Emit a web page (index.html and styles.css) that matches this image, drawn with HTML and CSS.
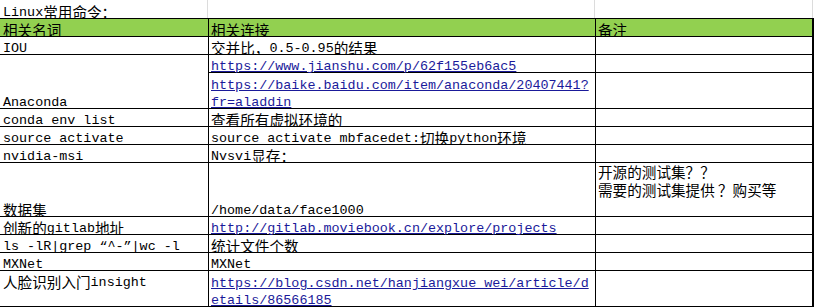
FILE: index.html
```html
<!DOCTYPE html>
<html>
<head>
<meta charset="utf-8">
<link rel="stylesheet" href="styles.css">
</head>
<body>
<div class="sheet">
  <div class="title-row">
    <div class="tc a"><span class="t">Linux<span class="zh">常用命令：</span></span></div>
    <div class="tc"></div>
    <div class="tc"></div>
  </div>
  <div class="grid">
    <div class="c a head"><span class="t"><span class="zh">相关名词</span></span></div>
    <div class="c head"><span class="t"><span class="zh">相关连接</span></span></div>
    <div class="c head"><span class="t"><span class="zh">备注</span></span></div>

    <div class="c a"><span class="t">IOU</span></div>
    <div class="c"><span class="t"><span class="zh">交并比，</span>0.5-0.95<span class="zh">的结果</span></span></div>
    <div class="c"></div>

    <div class="c a span2"><span class="t">Anaconda</span></div>
    <div class="c"><span class="t"><a href="#">https://www.jianshu.com/p/62f155eb6ac5</a></span></div>
    <div class="c"></div>

    <div class="c"><div class="t"><a href="#">https://baike.baidu.com/item/anaconda/20407441?</a><br><a href="#">fr=aladdin</a></div></div>
    <div class="c"></div>

    <div class="c a"><span class="t">conda env list</span></div>
    <div class="c"><span class="t"><span class="zh">查看所有虚拟环境的</span></span></div>
    <div class="c"></div>

    <div class="c a"><span class="t">source activate</span></div>
    <div class="c"><span class="t">source activate mbfacedet:<span class="zh">切换</span>python<span class="zh">环境</span></span></div>
    <div class="c"></div>

    <div class="c a"><span class="t">nvidia-msi</span></div>
    <div class="c"><span class="t">Nvsvi<span class="zh">显存：</span></span></div>
    <div class="c"></div>

    <div class="c a"><span class="t"><span class="zh">数据集</span></span></div>
    <div class="c"><span class="t">/home/data/face1000</span></div>
    <div class="c top notes"><div class="t"><span class="zh">开源的测试集？？</span><br><span class="zh">需要的测试集提供 ？购买等</span></div></div>

    <div class="c a"><span class="t"><span class="zh">创新的</span>gitlab<span class="zh">地址</span></span></div>
    <div class="c"><span class="t"><a href="#">http://gitlab.moviebook.cn/explore/projects</a></span></div>
    <div class="c"></div>

    <div class="c a"><span class="t">ls -lR|grep “^-”|wc -l</span></div>
    <div class="c"><span class="t"><span class="zh">统计文件个数</span></span></div>
    <div class="c"></div>

    <div class="c a"><span class="t">MXNet</span></div>
    <div class="c"><span class="t">MXNet</span></div>
    <div class="c"></div>

    <div class="c a top"><span class="t"><span class="zh">人脸识别入门</span>insight</span></div>
    <div class="c"><div class="t"><a href="#">https://blog.csdn.net/hanjiangxue_wei/article/d</a><br><a href="#">etails/86566185</a></div></div>
    <div class="c"></div>
  </div>
</div>
</body>
</html>
```

FILE: styles.css
```css
html, body {
  margin: 0;
  padding: 0;
  background: #ffffff;
}

body {
  font-family: "Liberation Mono", "Noto Sans CJK SC", monospace;
  font-size: 13.4px;
  color: #000000;
  overflow: hidden;
}

.sheet {
  width: 814px;
  height: 307px;
  overflow: hidden;
}

.zh {
  font-family: "Noto Sans CJK SC", "Noto Sans CJK JP", sans-serif;
  font-size: 14.6px;
  line-height: 0;
  vertical-align: -1.5px;
}

.title-row {
  display: grid;
  grid-template-columns: 208px 387px 218px;
  height: 18px;
  margin-left: -1px;
  padding-left: 1px;
}

.tc {
  border-right: 1px solid #dcdcdc;
  display: flex;
  align-items: flex-end;
  line-height: 17px;
  padding-left: 2px;
  white-space: nowrap;
}

.grid {
  display: grid;
  grid-template-columns: 208px 386px 216px;
  grid-template-rows: 17px 17px 17px 35px 17px 17px 17px 53px 17px 17px 17px 35px;
  gap: 1px;
  padding: 1px;
  background: #000000;
  margin-left: -1px;
  width: 813px;
}

.c {
  background: #ffffff;
  display: flex;
  align-items: flex-end;
  line-height: 17px;
  padding-left: 2px;
  white-space: nowrap;
}

.c.a,
.tc.a {
  padding-left: 3px;
}

.t {
  margin-bottom: -3px;
}

.c.head {
  background: #92d050;
}

.c.span2 {
  grid-row: span 2;
}

.c.top {
  align-items: flex-start;
}

.c.top .t {
  margin-bottom: 0;
  margin-top: 3px;
}

.c.notes .t {
  margin-top: 1px;
  line-height: 18px;
}

a {
  color: #1a1a9a;
  text-decoration: underline;
}
```
